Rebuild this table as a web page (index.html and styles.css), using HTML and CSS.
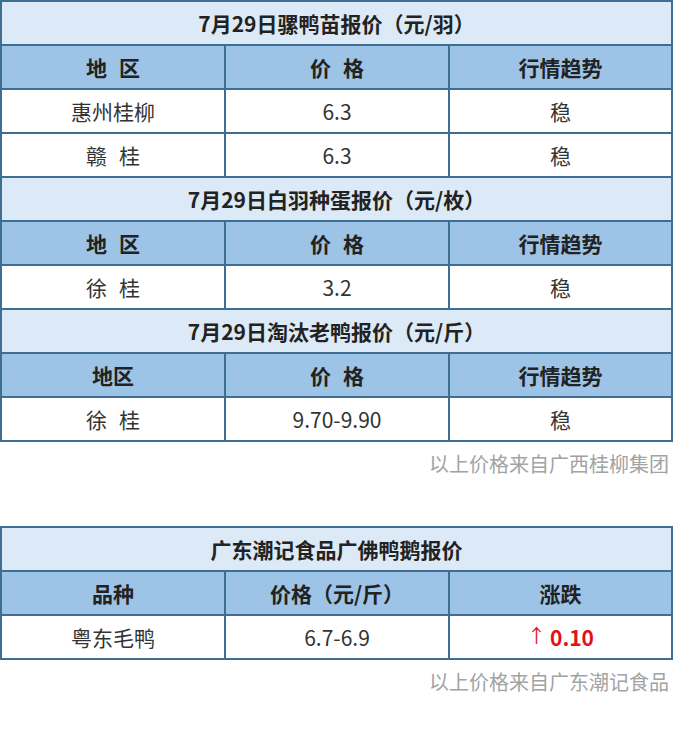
FILE: index.html
```html
<!DOCTYPE html>
<html lang="zh-CN">
<head>
<meta charset="utf-8">
<title>鸭苗报价</title>
<link rel="stylesheet" href="styles.css">
</head>
<body>
<div class="page">
  <table class="price-table">
    <colgroup><col class="c1"><col class="c2"><col class="c3"></colgroup>
    <tr class="title"><td colspan="3">7月29日骡鸭苗报价（元/羽）</td></tr>
    <tr class="head"><td>地<span class="gap"></span>区</td><td>价<span class="gap"></span>格</td><td>行情趋势</td></tr>
    <tr class="row"><td>惠州桂柳</td><td>6.3</td><td>稳</td></tr>
    <tr class="row"><td>赣<span class="gap"></span>桂</td><td>6.3</td><td>稳</td></tr>
    <tr class="title"><td colspan="3">7月29日白羽种蛋报价（元/枚）</td></tr>
    <tr class="head"><td>地<span class="gap"></span>区</td><td>价<span class="gap"></span>格</td><td>行情趋势</td></tr>
    <tr class="row"><td>徐<span class="gap"></span>桂</td><td>3.2</td><td>稳</td></tr>
    <tr class="title"><td colspan="3">7月29日淘汰老鸭报价（元/斤）</td></tr>
    <tr class="head"><td>地区</td><td>价<span class="gap"></span>格</td><td>行情趋势</td></tr>
    <tr class="row"><td>徐<span class="gap"></span>桂</td><td>9.70-9.90</td><td>稳</td></tr>
  </table>
  <p class="note">以上价格来自广西桂柳集团</p>

  <table class="price-table second">
    <colgroup><col class="c1"><col class="c2"><col class="c3"></colgroup>
    <tr class="title"><td colspan="3">广东潮记食品广佛鸭鹅报价</td></tr>
    <tr class="head"><td>品种</td><td>价格（元/斤）</td><td>涨跌</td></tr>
    <tr class="row"><td>粤东毛鸭</td><td>6.7-6.9</td><td><span class="up"><span class="arrow">↑</span>0.10</span></td></tr>
  </table>
  <p class="note">以上价格来自广东潮记食品</p>
</div>
</body>
</html>
```
FILE: styles.css
```css
html, body {
  margin: 0;
  padding: 0;
  background: #ffffff;
}

body {
  font-family: "Noto Sans CJK SC", "Microsoft YaHei", sans-serif;
  color: #333;
}

.page {
  width: 674px;
}

.price-table {
  border-collapse: collapse;
  width: 673px;
  table-layout: fixed;
  margin: 0;
}

.price-table .c1, .price-table .c2 {
  width: 224px;
}

.price-table td {
  border: 2px solid #3e6f93;
  height: 42px;
  padding: 0;
  text-align: center;
  vertical-align: middle;
  font-size: 21px;
  line-height: 24px;
}

.title td {
  background: #dce9f6;
  font-weight: bold;
  color: #222;
}

.head td {
  background: #9dc3e6;
  font-weight: bold;
  color: #222;
}

.row td {
  background: #ffffff;
  color: #333;
}

.gap {
  display: inline-block;
  width: 12px;
}

.note {
  margin: 0;
  height: 44px;
  line-height: 44px;
  text-align: right;
  padding-right: 5px;
  font-size: 20px;
  color: #a3a3a3;
}

.second {
  margin-top: 40px;
}

.up {
  color: #e3101c;
  font-weight: bold;
}

.arrow {
  font-weight: normal;
  font-size: 19px;
  margin-right: 4px;
  position: relative;
  top: -3px;
}
```
